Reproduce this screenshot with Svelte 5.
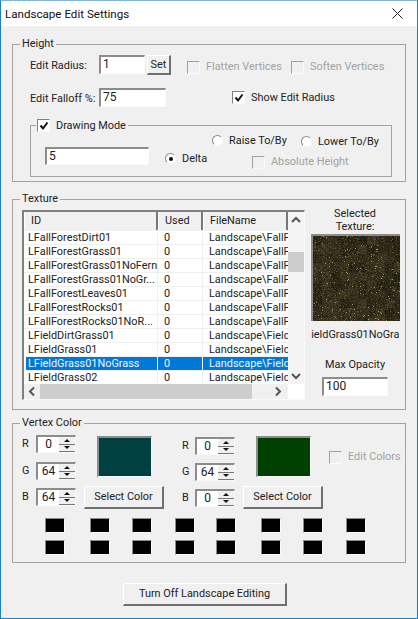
<script>
  const rows = [
    ["LFallForestDirt01", "Landscape\\FallForest\\Dirt01"],
    ["LFallForestGrass01", "Landscape\\FallForest\\Grass01"],
    ["LFallForestGrass01NoFern", "Landscape\\FallForest\\Grass02"],
    ["LFallForestGrass01NoGr...", "Landscape\\FallForest\\Grass03"],
    ["LFallForestLeaves01", "Landscape\\FallForest\\Leaves01"],
    ["LFallForestRocks01", "Landscape\\FallForest\\Rocks01"],
    ["LFallForestRocks01NoR...", "Landscape\\FallForest\\Rocks02"],
    ["LFieldDirtGrass01", "Landscape\\Field\\DirtGrass01"],
    ["LFieldGrass01", "Landscape\\Field\\Grass01"],
    ["LFieldGrass01NoGrass", "Landscape\\Field\\Grass02"],
    ["LFieldGrass02", "Landscape\\Field\\Grass03"],
  ];
  const selectedRow = 9;

  // left margin of each swatch, the dialog spacing is uneven
  const swatchGaps = [0, 25, 22, 23, 21, 25, 22, 23];

  // ground texture preview, seeded so every run looks the same
  function paintNoise(canvas) {
    const ctx = canvas.getContext("2d");
    const w = canvas.width;
    const h = canvas.height;
    let seed = 4711;
    const rnd = () => {
      seed = (seed * 1664525 + 1013904223) >>> 0;
      return seed / 4294967296;
    };
    const coarse = [];
    for (let i = 0; i < 144; i++) coarse.push(rnd());
    const img = ctx.createImageData(w, h);
    for (let y = 0; y < h; y++) {
      for (let x = 0; x < w; x++) {
        const c = coarse[(Math.floor(y / 9) * 12 + Math.floor(x / 9)) % 144];
        const n = rnd();
        let l = 0.62 + c * 0.3 + (n - 0.5) * 0.55;
        if (n > 0.985) l = 2.5;
        else if (n > 0.95) l = 1.5;
        const i = (y * w + x) * 4;
        img.data[i] = 68 * l;
        img.data[i + 1] = 60 * l;
        img.data[i + 2] = 36 * l;
        img.data[i + 3] = 255;
      }
    }
    ctx.putImageData(img, 0, 0);
  }
</script>

{#snippet check(label, checked, disabled)}
  <span class="check" class:disabled>
    <span class="check-box">
      {#if checked}
        <svg width="10" height="10" viewBox="0 0 10 10"><path d="M1.5 4.5 L4 7.5 L8.5 1.5" fill="none" stroke="#111" stroke-width="2" /></svg>
      {/if}
    </span>
    <span>{label}</span>
  </span>
{/snippet}

{#snippet radio(label, selected)}
  <span class="radio">
    <span class="radio-dot">
      {#if selected}<span class="radio-fill"></span>{/if}
    </span>
    <span>{label}</span>
  </span>
{/snippet}

{#snippet spin(label, value)}
  <div class="spin-row">
    <span class="spin-label">{label}</span>
    <div class="spin">
      <span class="spin-value">{value}</span>
      <div class="spin-buttons">
        <span class="spin-btn"><i class="up"></i></span>
        <span class="spin-btn"><i class="down"></i></span>
      </div>
    </div>
  </div>
{/snippet}

<div class="window">
  <div class="titlebar">
    <span class="title">Landscape Edit Settings</span>
    <svg class="close" width="11" height="11" viewBox="0 0 11 11"><path d="M0.5 0.5 L10.5 10.5 M10.5 0.5 L0.5 10.5" stroke="#222" stroke-width="1" /></svg>
  </div>

  <div class="content">
    <fieldset class="group height-group">
      <legend>Height</legend>
      <div class="row row-radius">
        <span class="field-label">Edit Radius:</span>
        <div class="input radius-input">1</div>
        <div class="button set-button">Set</div>
        <div class="flatten">{@render check("Flatten Vertices", false, true)}</div>
        <div class="soften">{@render check("Soften Vertices", false, true)}</div>
      </div>
      <div class="row row-falloff">
        <span class="field-label">Edit Falloff %:</span>
        <div class="input falloff-input">75</div>
        <div class="show-radius">{@render check("Show Edit Radius", true, false)}</div>
      </div>

      <fieldset class="group drawing-group">
        <legend>{@render check("Drawing Mode", true, false)}</legend>
        <div class="drawing-body">
          <div class="input amount-input">5</div>
          <div class="delta">{@render radio("Delta", true)}</div>
          <div class="drawing-right">
            <div class="raise-lower">
              <div class="raise">{@render radio("Raise To/By", false)}</div>
              {@render radio("Lower To/By", false)}
            </div>
            <div class="absolute-height">{@render check("Absolute Height", false, true)}</div>
          </div>
        </div>
      </fieldset>
    </fieldset>

    <fieldset class="group texture-group">
      <legend>Texture</legend>
      <div class="texture-body">
        <div class="listview">
          <div class="list-main">
            <div class="list-header">
              <div class="head col-id">ID</div>
              <div class="head col-used">Used</div>
              <div class="head col-file">FileName</div>
            </div>
            {#each rows as row, i}
              <div class="list-row" class:selected={i === selectedRow}>
                <div class="cell col-id"><span class="cell-text">{row[0]}</span></div>
                <div class="cell col-used"><span class="cell-text">0</span></div>
                <div class="cell col-file"><span class="cell-text">{row[1]}</span></div>
              </div>
            {/each}
          </div>
          <div class="vscroll">
            <svg width="16" height="16" viewBox="0 0 16 16"><path d="M4 10 L8 6 L12 10" fill="none" stroke="#555" stroke-width="2" /></svg>
            <div class="vtrack"><div class="vthumb"></div></div>
            <svg width="16" height="16" viewBox="0 0 16 16"><path d="M4 6 L8 10 L12 6" fill="none" stroke="#555" stroke-width="2" /></svg>
          </div>
          <div class="hscroll">
            <svg width="16" height="15" viewBox="0 0 16 15"><path d="M10 3.5 L6 7.5 L10 11.5" fill="none" stroke="#555" stroke-width="2" /></svg>
            <div class="hthumb"></div>
            <svg class="hright" width="16" height="15" viewBox="0 0 16 15"><path d="M6 3.5 L10 7.5 L6 11.5" fill="none" stroke="#555" stroke-width="2" /></svg>
          </div>
        </div>

        <div class="texture-side">
          <div class="selected-label">Selected<br />Texture:</div>
          <canvas class="preview" width="87" height="85" use:paintNoise></canvas>
          <div class="caption"><span>LFieldGrass01NoGrass</span></div>
          <div class="opacity-label">Max Opacity</div>
          <div class="input opacity-input">100</div>
        </div>
      </div>
    </fieldset>

    <fieldset class="group vertex-group">
      <legend>Vertex Color</legend>
      <div class="vertex-body">
        <div class="spins spins-left">
          {@render spin("R", 0)}
          {@render spin("G", 64)}
          {@render spin("B", 64)}
        </div>
        <div class="picker">
          <div class="color-box teal"></div>
          <div class="button select-button">Select Color</div>
        </div>
        <div class="spins spins-right">
          {@render spin("R", 0)}
          {@render spin("G", 64)}
          {@render spin("B", 0)}
        </div>
        <div class="picker">
          <div class="color-box green"></div>
          <div class="button select-button">Select Color</div>
        </div>
        <div class="edit-colors">{@render check("Edit Colors", false, true)}</div>
      </div>
      {#each [0, 1] as line}
        <div class="swatches" class:second={line === 1}>
          {#each swatchGaps as gap}
            <div class="swatch" style="margin-left: {gap}px"></div>
          {/each}
        </div>
      {/each}
    </fieldset>

    <div class="button turn-off">Turn Off Landscape Editing</div>
  </div>
</div>

<style>
  :global(body) {
    margin: 0;
    background: #f0f0f0;
  }

  .window {
    box-sizing: border-box;
    width: 418px;
    height: 619px;
    overflow: hidden;
    background: #f0f0f0;
    border: 1px solid #1c7fc9;
    border-top-color: #7fb6de;
    font-family: Roboto, "Liberation Sans", Arial, sans-serif;
    font-size: 10.9px;
    line-height: 14px;
    color: #222;
  }

  .titlebar {
    display: flex;
    align-items: center;
    justify-content: space-between;
    height: 25px;
    padding: 0 14px 0 4px;
    background: #fff;
  }

  .title {
    font-size: 11.6px;
    color: #111;
  }

  .content {
    padding: 11px 11px 0;
  }

  .group {
    margin: 0;
    padding: 0;
    min-width: 0;
    border: 1px solid #a3a3a3;
  }

  legend {
    margin-left: 7px;
    padding: 0 2px;
    height: 14px;
  }

  .height-group {
    height: 145px;
    box-sizing: border-box;
  }

  .row {
    display: flex;
    align-items: flex-start;
    padding-left: 17px;
  }

  .row-radius {
    padding-top: 4px;
  }

  .row-falloff {
    margin-top: 10px;
  }

  .field-label {
    width: 69px;
    padding-top: 4px;
    white-space: nowrap;
  }

  .input {
    box-sizing: border-box;
    height: 19px;
    padding-left: 2px;
    background: #fff;
    border-style: solid;
    border-width: 2px 1px 1px 2px;
    border-color: #8c8c8c #fafafa #fafafa #8c8c8c;
    line-height: 15px;
    font-size: 12px;
  }

  .radius-input {
    width: 46px;
  }

  .falloff-input {
    width: 67px;
  }

  .button {
    box-sizing: border-box;
    display: flex;
    align-items: center;
    justify-content: center;
    background: #f0f0f0;
    border-style: solid;
    border-width: 1px 2px 2px 1px;
    border-color: #fff #6f6f6f #6f6f6f #fff;
  }

  .set-button {
    width: 24px;
    height: 20px;
    margin-left: 2px;
  }

  .check {
    display: inline-flex;
    align-items: center;
    gap: 6px;
    white-space: nowrap;
  }

  .check-box {
    box-sizing: border-box;
    display: flex;
    align-items: center;
    justify-content: center;
    width: 13px;
    height: 13px;
    background: #fff;
    border-style: solid;
    border-width: 1px;
    border-color: #808080 #fafafa #fafafa #808080;
  }

  .check.disabled {
    color: #a2a2a2;
  }

  .check.disabled .check-box {
    background: #f0f0f0;
    border-color: #a0a0a0 #fafafa #fafafa #a0a0a0;
  }

  .flatten {
    width: 104px;
    margin: 5px 0 0 16px;
  }

  .soften {
    margin-top: 5px;
  }

  .show-radius {
    margin: 3px 0 0 66px;
  }

  .drawing-group {
    margin: 12px 13px 0 17px;
    height: 58px;
    box-sizing: border-box;
  }

  .drawing-group legend {
    margin-left: 5px;
    padding: 0 2px 0 1px;
  }

  .drawing-body {
    display: flex;
    align-items: flex-start;
    padding-left: 14px;
  }

  .amount-input {
    width: 104px;
    height: 18px;
    margin-top: 14px;
  }

  .delta {
    width: 47px;
    margin: 18px 0 0 16px;
  }

  .drawing-right {
    margin-top: 1px;
  }

  .raise-lower {
    display: flex;
  }

  .raise {
    width: 89px;
  }

  .absolute-height {
    margin: 5px 0 0 40px;
  }

  .radio {
    display: inline-flex;
    align-items: center;
    gap: 6px;
    white-space: nowrap;
  }

  .radio-dot {
    box-sizing: border-box;
    display: flex;
    align-items: center;
    justify-content: center;
    width: 11px;
    height: 11px;
    border-radius: 50%;
    background: #fff;
    border: 1px solid;
    border-color: #8a8a8a #f8f8f8 #f8f8f8 #8a8a8a;
  }

  .radio-fill {
    width: 4px;
    height: 4px;
    border-radius: 50%;
    background: #111;
  }

  .texture-group {
    margin-top: 10px;
    height: 218px;
    box-sizing: border-box;
  }

  .texture-body {
    display: flex;
    padding: 4px 0 0 9px;
  }

  .listview {
    box-sizing: border-box;
    display: grid;
    grid-template-columns: 264px 16px;
    grid-template-rows: 172px 15px;
    width: 283px;
    height: 190px;
    background: #fff;
    border-style: solid;
    border-width: 2px 1px 1px 2px;
    border-color: #808080 #fafafa #fafafa #808080;
  }

  .list-main {
    overflow: hidden;
  }

  .list-header {
    display: flex;
    height: 19px;
    background: #f0f0f0;
  }

  .head {
    box-sizing: border-box;
    height: 18px;
    padding: 2px 0 0 6px;
    border-right: 2px solid #777;
    border-left: 1px solid #fff;
  }

  .col-id {
    width: 134px;
    flex: none;
  }

  .col-used {
    width: 45px;
    flex: none;
  }

  .col-file {
    width: 85px;
    flex: none;
  }

  .list-row {
    display: flex;
    box-sizing: border-box;
    height: 14px;
    line-height: 13px;
    border-bottom: 1px solid #f0f0f0;
  }

  .cell {
    box-sizing: border-box;
    overflow: hidden;
    white-space: nowrap;
    padding-left: 4px;
    border-right: 1px solid #f0f0f0;
  }

  .cell.col-id {
    width: 132px;
    margin-left: 2px;
    padding-left: 2px;
  }

  .cell.col-used {
    padding-left: 6px;
  }

  .cell.col-file {
    padding-left: 6px;
    border-right: none;
  }

  .list-row.selected {
    color: #f4f4f4;
  }

  .list-row.selected .cell {
    background: #0078d7;
    border-right-color: #fff;
  }

  .vscroll {
    display: flex;
    flex-direction: column;
    background: #f4f4f4;
  }

  .vtrack {
    flex: 1;
    padding-top: 24px;
  }

  .vthumb {
    height: 20px;
    background: #cdcdcd;
  }

  .hscroll {
    display: flex;
    background: #f0f0f0;
    grid-column: 1 / 3;
    grid-row: 2;
    margin-right: 16px;
  }

  .hthumb {
    width: 212px;
    background: #cdcdcd;
  }

  .hright {
    margin-left: auto;
    margin-right: 2px;
  }

  .texture-side {
    display: flex;
    flex-direction: column;
    align-items: center;
    width: 100px;
    text-align: center;
  }

  .selected-label {
    line-height: 13px;
    margin-top: -3px;
  }

  .preview {
    box-sizing: content-box;
    display: block;
    width: 87px;
    height: 85px;
    margin-top: 1px;
    border-style: solid;
    border-width: 2px 0 0 2px;
    border-color: #8c8c8c;
    filter: blur(0.4px);
  }

  .caption {
    display: flex;
    justify-content: center;
    width: 88px;
    margin-top: 7px;
    overflow: hidden;
    white-space: nowrap;
  }

  .caption span {
    flex: none;
  }

  .opacity-label {
    margin-top: 16px;
  }

  .opacity-input {
    width: 66px;
    height: 19px;
    margin-top: 5px;
    text-align: left;
  }

  .vertex-group {
    margin-top: 6px;
    height: 147px;
    box-sizing: border-box;
  }

  .vertex-body {
    display: flex;
    align-items: flex-start;
    padding: 5px 0 0 9px;
  }

  .spins {
    display: flex;
    flex-direction: column;
    gap: 8px;
  }

  .spins-left .spin-row:nth-child(2) {
    margin-top: 1px;
  }

  .spins-right {
    margin: 2px 0 0 18px;
  }

  .spin-row {
    display: flex;
    align-items: center;
  }

  .spin-label {
    width: 14px;
  }

  .spins-right .spin-label {
    width: 13px;
  }

  .spin {
    box-sizing: border-box;
    display: flex;
    width: 40px;
    height: 18px;
    background: #fff;
    border-style: solid;
    border-width: 2px 1px 1px 2px;
    border-color: #8c8c8c #fafafa #fafafa #8c8c8c;
  }

  .spin-value {
    flex: 1;
    text-align: center;
    line-height: 15px;
    font-size: 12px;
  }

  .spin-buttons {
    display: flex;
    flex-direction: column;
    width: 16px;
  }

  .spin-btn {
    box-sizing: border-box;
    display: flex;
    align-items: center;
    justify-content: center;
    flex: 1;
    background: #f0f0f0;
    border-bottom: 1px solid #777;
  }

  .spin-btn i {
    width: 0;
    height: 0;
    border-left: 3px solid transparent;
    border-right: 3px solid transparent;
  }

  .spin-btn i.up {
    border-bottom: 3px solid #111;
  }

  .spin-btn i.down {
    border-top: 3px solid #111;
  }

  .picker {
    display: flex;
    flex-direction: column;
    align-items: center;
    width: 80px;
    margin: 1px 0 0 8px;
  }

  .color-box {
    box-sizing: border-box;
    width: 55px;
    height: 41px;
    border-style: solid;
    border-width: 2px 1px 1px 2px;
    border-color: #8c8c8c #fafafa #fafafa #8c8c8c;
  }

  .color-box.teal {
    background: #004040;
  }

  .color-box.green {
    background: #004000;
  }

  .select-button {
    width: 80px;
    height: 23px;
    margin-top: 9px;
  }

  .edit-colors {
    margin: 15px 0 0 6px;
  }

  .swatches {
    display: flex;
    padding-left: 32px;
    margin-top: 9px;
  }

  .swatches.second {
    margin-top: 7px;
  }

  .swatch {
    box-sizing: border-box;
    width: 20px;
    height: 15px;
    background: #000;
    border-style: solid;
    border-width: 1px;
    border-color: #8c8c8c #fafafa #fafafa #8c8c8c;
  }

  .turn-off {
    width: 164px;
    height: 23px;
    margin: 20px 0 0 111px;
  }
</style>
